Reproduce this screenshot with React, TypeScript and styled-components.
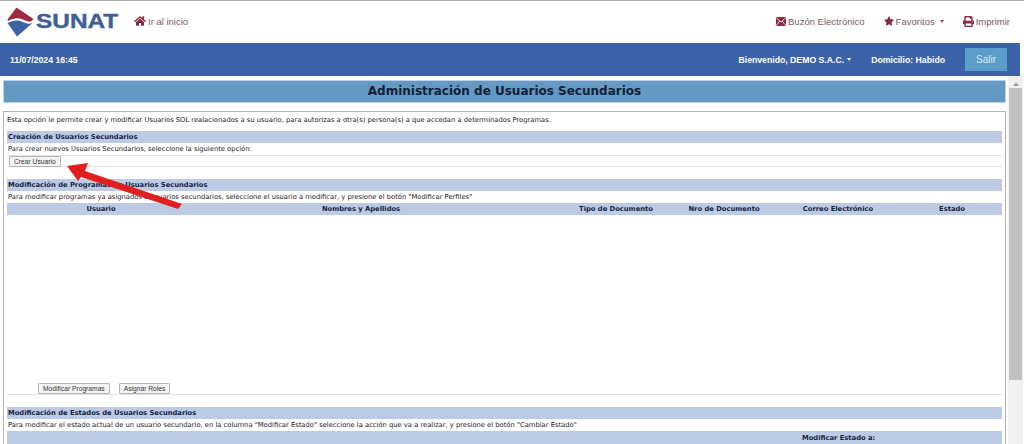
import React from "react";
import styled, { createGlobalStyle } from "styled-components";
import { FaHome, FaStar, FaPrint } from "react-icons/fa";

const GlobalStyle = createGlobalStyle`
  html, body {
    margin: 0;
    padding: 0;
    height: 444px;
    overflow: hidden;
    background: #fff;
    font-family: "Liberation Sans", Arial, sans-serif;
  }
`;

const columns = [
  { label: "Usuario", width: 188, offset: 0 },
  { label: "Nombres y Apellidos", width: 332, offset: 0 },
  { label: "Tipo de Documento", width: 143, offset: 35 },
  { label: "Nro de Documento", width: 108, offset: 0 },
  { label: "Correo Electrónico", width: 120, offset: 0 },
  { label: "Estado", width: 104, offset: 4 },
];

const App = () => {
  return (
    <Page>
      <GlobalStyle />
      <TopNav>
        <Brand>
          <LogoMark viewBox="0 0 27 30">
            <path d="M9.5 0.5 L26.5 12 L24 14.5 C19 15.5 15 10 8 11.5 C5 12 3 13 1 14 L0.5 12.5 Z" fill="#9c2b42" />
            <path d="M0.5 16 C5 14 9 13 13 14 C18 15.5 21 18 25.5 16 L10 29.5 Z" fill="#3c63a8" />
          </LogoMark>
          <LogoText>SUNAT</LogoText>
        </Brand>
        <NavLink>
          <FaHome size={12} color="#8a2a42" />
          Ir al inicio
        </NavLink>
        <NavRight>
          <NavLink>
            <MailIcon viewBox="0 0 10 9">
              <rect width="10" height="9" fill="#8a2a42" />
              <path d="M0 0.5 L5 5 L10 0.5 M0 9 L3.8 4 M10 9 L6.2 4" stroke="#fff" strokeWidth="0.8" fill="none" />
            </MailIcon>
            Buzón Electrónico
          </NavLink>
          <NavLink>
            <FaStar size={10} color="#8a2a42" />
            Favoritos
            <Caret $color="#7a5a64" />
          </NavLink>
          <NavLink>
            <FaPrint size={11} color="#8a2a42" />
            Imprimir
          </NavLink>
        </NavRight>
      </TopNav>

      <BlueBar>
        <BarText>11/07/2024 16:45</BarText>
        <BarRight>
          <BarText>
            Bienvenido, DEMO S.A.C.
            <Caret $color="#fff" />
          </BarText>
          <BarText>Domicilio: Habido</BarText>
          <ExitButton>Salir</ExitButton>
        </BarRight>
      </BlueBar>

      <Body>
        <Main>
          <TitleBox>Administración de Usuarios Secundarios</TitleBox>
          <ContentBox>
            <Intro>
              Esta opción le permite crear y modificar Usuarios SOL realacionados a su usuario, para autorizas a otra(s) persona(s) a que accedan a determinados Programas.
            </Intro>

            <SectionHeader>Creación de Usuarios Secundarios</SectionHeader>
            <SectionText>Para crear nuevos Usuarios Secundarios, seleccione la siguiente opción:</SectionText>
            <ButtonRow>
              <LegacyButton>Crear Usuario</LegacyButton>
            </ButtonRow>

            <SectionHeader $spaced>Modificación de Programas de Usuarios Secundarios</SectionHeader>
            <SectionText>
              Para modificar programas ya asignados a usuarios secundarios, seleccione el usuario a modificar, y presione el botón "Modificar Perfiles"
            </SectionText>
            <ColumnRow>
              {columns.map((c) => (
                <ColumnCell key={c.label} $width={c.width} $offset={c.offset}>
                  {c.label}
                </ColumnCell>
              ))}
            </ColumnRow>
            <EmptyTable />
            <ActionRow>
              <LegacyButton>Modificar Programas</LegacyButton>
              <LegacyButton>Asignar Roles</LegacyButton>
            </ActionRow>

            <SectionHeader $spaced>Modificación de Estados de Usuarios Secundarios</SectionHeader>
            <SectionText>
              Para modificar el estado actual de un usuario secundario, en la columna "Modificar Estado" seleccione la acción que va a realizar, y presione el botón "Cambiar Estado"
            </SectionText>
            <StateRow>
              <StateLabel>Modificar Estado a:</StateLabel>
            </StateRow>
          </ContentBox>
        </Main>
        <Scrollbar>
          <ScrollArrow />
          <ScrollThumb />
        </Scrollbar>
      </Body>

      <ArrowOverlay viewBox="0 0 1024 444">
        <path d="M67 166 L88 163 L85 171 L182 204 L178 209 L81 177 L78 181 Z" fill="#e0201f" />
      </ArrowOverlay>
    </Page>
  );
};

export default App;

const Page = styled.div`
  position: relative;
  width: 1024px;
  height: 444px;
  overflow: hidden;
  display: flex;
  flex-direction: column;
`;

const TopNav = styled.header`
  height: 43px;
  box-sizing: border-box;
  border-top: 1px solid #b0b0b0;
  display: flex;
  align-items: center;
  padding: 0 14px 2px 7px;
  background: #fff;
`;

const Brand = styled.div`
  display: flex;
  align-items: center;
  width: 127px;
`;

const LogoMark = styled.svg`
  width: 27px;
  height: 30px;
  flex-shrink: 0;
  margin-top: 2px;
`;

const LogoText = styled.span`
  font-size: 20px;
  font-weight: 700;
  color: #3f5f96;
  margin-left: 2px;
  transform: scaleX(1.22);
  transform-origin: left center;
  -webkit-text-stroke: 0.4px #3f5f96;
`;

const MailIcon = styled.svg`
  width: 10px;
  height: 9px;
`;

const NavLink = styled.a`
  display: flex;
  align-items: center;
  gap: 2px;
  font-size: 9.5px;
  color: #7d5a64;
  white-space: nowrap;
`;

const NavRight = styled.nav`
  margin-left: auto;
  display: flex;
  align-items: center;
  gap: 19px;
`;

const Caret = styled.span<{ $color: string }>`
  display: inline-block;
  width: 0;
  height: 0;
  margin-left: 3px;
  border-left: 2.5px solid transparent;
  border-right: 2.5px solid transparent;
  border-top: 3px solid ${(props) => props.$color};
`;

const BlueBar = styled.div`
  width: 1020px;
  height: 33px;
  background: #3c62a9;
  display: flex;
  align-items: center;
  padding: 0 13px 0 10px;
  box-sizing: border-box;
  color: #fff;
`;

const BarRight = styled.div`
  margin-left: auto;
  display: flex;
  align-items: center;
  gap: 20px;
`;

const BarText = styled.span`
  display: flex;
  align-items: center;
  font-size: 8.7px;
  font-weight: 700;
`;

const ExitButton = styled.button`
  width: 42px;
  height: 23px;
  border: none;
  padding: 0;
  background: #5b9ec9;
  color: #dfeaf3;
  font-family: inherit;
  font-size: 10px;
`;

const Body = styled.div`
  flex: 1;
  display: flex;
  min-height: 0;
`;

const Main = styled.main`
  width: 1008px;
  padding: 4px 2px 0 3px;
  box-sizing: border-box;
`;

const TitleBox = styled.h1`
  margin: 0;
  height: 23px;
  box-sizing: border-box;
  border: 1px solid #c2d0e4;
  background: #6499c4;
  color: #0f1f38;
  font-family: "DejaVu Sans", Verdana, sans-serif;
  font-size: 12px;
  font-weight: 700;
  line-height: 21px;
  text-align: center;
`;

const ContentBox = styled.section`
  margin-top: 8px;
  height: 400px;
  border: 1px solid #b5b5b5;
  border-bottom: none;
  padding: 3px 3px 0 3px;
  box-sizing: border-box;
  font-family: "DejaVu Sans", Verdana, sans-serif;
  font-size: 6.75px;
  color: #222;
`;

const Intro = styled.p`
  margin: 0 0 6px;
  height: 10px;
  line-height: 10px;
  white-space: nowrap;
`;

const SectionHeader = styled.div<{ $spaced?: boolean }>`
  height: 12px;
  line-height: 12px;
  margin-top: ${(props) => (props.$spaced ? "12px" : "0")};
  padding-left: 1px;
  background: #bccae5;
  color: #14233f;
  font-weight: 700;
`;

const SectionText = styled.div`
  height: 12px;
  line-height: 12px;
  padding-left: 1px;
  white-space: nowrap;
`;

const ButtonRow = styled.div`
  height: 12px;
  box-sizing: border-box;
  border-top: 1px solid #e2e2e2;
  border-bottom: 1px solid #e2e2e2;
  display: flex;
  align-items: center;
  padding-left: 2px;
`;

const LegacyButton = styled.button`
  height: 11px;
  padding: 0 4px;
  border: 1px solid #b4b4b4;
  border-radius: 1px;
  background: #f4f4f4;
  color: #333;
  font-family: "Liberation Sans", Arial, sans-serif;
  font-size: 6.7px;
  line-height: 9px;
`;

const ColumnRow = styled.div`
  display: flex;
  height: 12px;
  background: #bccae5;
`;

const ColumnCell = styled.div<{ $width: number; $offset: number }>`
  width: ${(props) => props.$width}px;
  padding-left: ${(props) => props.$offset}px;
  box-sizing: border-box;
  line-height: 12px;
  text-align: center;
  font-weight: 700;
  color: #14233f;
`;

const EmptyTable = styled.div`
  height: 168px;
`;

const ActionRow = styled.div`
  height: 12px;
  box-sizing: border-box;
  padding-left: 31px;
  display: flex;
  align-items: center;
  gap: 9px;
  border-bottom: 1px solid #e2e2e2;
`;

const StateRow = styled.div`
  height: 13px;
  background: #bccae5;
  display: flex;
  align-items: center;
  padding-left: 795px;
`;

const StateLabel = styled.span`
  font-weight: 700;
  color: #14233f;
`;

const Scrollbar = styled.div`
  width: 15px;
  background: #f1f1f1;
  display: flex;
  flex-direction: column;
  align-items: center;
`;

const ScrollArrow = styled.div`
  margin-top: 6px;
  width: 0;
  height: 0;
  border-left: 3px solid transparent;
  border-right: 3px solid transparent;
  border-bottom: 4px solid #a3a3a3;
`;

const ScrollThumb = styled.div`
  margin-top: 2px;
  width: 13px;
  height: 292px;
  background: #c1c1c1;
`;

const ArrowOverlay = styled.svg`
  position: absolute;
  inset: 0;
  width: 1024px;
  height: 444px;
  pointer-events: none;
`;
